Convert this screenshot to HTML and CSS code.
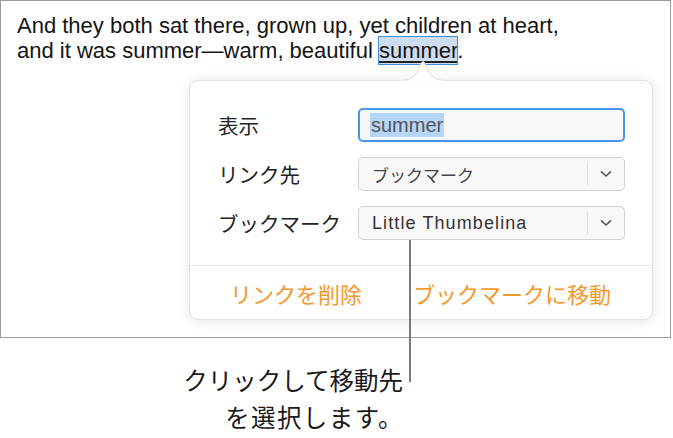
FILE: index.html
```html
<!DOCTYPE html>
<html lang="ja">
<head>
<meta charset="utf-8">
<title>Link popover</title>
<link rel="stylesheet" href="styles.css">
</head>
<body>
<div class="stage">
  <div class="frame">
    <p class="prose">And they both sat there, grown up, yet children at heart,<br>and it was summer—warm, beautiful <span class="link-sel">summer</span>.</p>
    <div class="popover">
      <svg class="arrow" width="46" height="21" viewBox="0 0 46 21" aria-hidden="true">
        <path d="M0 20.5 C9 20.5 13 18 17 12 L21.2 3 Q23 0 24.8 3 L29 12 C33 18 37 20.5 46 20.5" fill="#fff" stroke="#dcdcdc" stroke-width="1"/>
        <rect x="0" y="20.5" width="46" height="1" fill="#fff"/>
      </svg>
      <div class="fields">
        <span class="label">表示</span>
        <div class="input"><span class="input-sel">summer</span></div>
        <span class="label">リンク先</span>
        <div class="select">
          <span class="select-value jp">ブックマーク</span>
          <span class="select-btn"><svg width="12" height="8" viewBox="0 0 12 8"><path d="M1.5 1.8 L6 6 L10.5 1.8" fill="none" stroke="#555" stroke-width="1.6" stroke-linecap="round" stroke-linejoin="round"/></svg></span>
        </div>
        <span class="label">ブックマーク</span>
        <div class="select">
          <span class="select-value">Little Thumbelina</span>
          <span class="select-btn"><svg width="12" height="8" viewBox="0 0 12 8"><path d="M1.5 1.8 L6 6 L10.5 1.8" fill="none" stroke="#555" stroke-width="1.6" stroke-linecap="round" stroke-linejoin="round"/></svg></span>
        </div>
      </div>
      <div class="actions">
        <span class="action">リンクを削除</span>
        <span class="action">ブックマークに移動</span>
      </div>
    </div>
  </div>
  <span class="leader"></span>
  <p class="caption">クリックして移動先<br><span class="caption-2">を選択します。</span></p>
</div>
</body>
</html>
```
FILE: styles.css
```css
* { box-sizing: border-box; }
html, body { margin: 0; padding: 0; background: #fff; }
body { font-family: "Liberation Sans", "Noto Sans CJK JP", sans-serif; color: #1a1a1a; }

.stage { position: relative; width: 673px; height: 438px; overflow: hidden; }

.frame {
  width: 671px;
  height: 338px;
  border: 1px solid #9a9a9a;
}

.prose {
  margin: 0;
  padding: 12px 0 0 16px;
  font-size: 22px;
  line-height: 25px;
  color: #141414;
}

.link-sel {
  background: #cfdcee;
  outline: 1.5px solid #3b8ee8;
  outline-offset: 0;
  text-decoration: underline;
  text-decoration-color: #222;
  text-underline-offset: 3px;
  padding: 1px 0 1px;
}

.popover {
  position: relative;
  margin: 17px 0 0 188px;
  width: 464px;
  height: 240px;
  background: #fff;
  border: 1px solid #e2e2e2;
  border-radius: 9px;
  box-shadow: 0 1px 14px rgba(0, 0, 0, 0.10);
  font-family: "Noto Sans CJK JP", "Liberation Sans", sans-serif;
}

.arrow {
  position: absolute;
  left: 210px;
  top: -21px;
  display: block;
}

.fields {
  display: grid;
  grid-template-columns: 140px 267px;
  grid-auto-rows: 34px;
  row-gap: 15px;
  align-items: center;
  padding: 27px 0 0 28px;
  height: 184px;
}

.label {
  font-size: 20.5px;
  color: #222;
  line-height: 34px;
}

.input {
  height: 34px;
  border: 2px solid #4a94ee;
  border-radius: 5px;
  background: #f8f8f8;
  padding: 0 0 0 10px;
  display: flex;
  align-items: center;
}

.input-sel {
  font-family: "Liberation Sans", sans-serif;
  font-size: 20px;
  color: #555;
  background: #b6d5fb;
  line-height: 24px;
  padding: 0 1px;
}

.select {
  height: 34px;
  border: 1px solid #d2d2d2;
  border-radius: 5px;
  background: #f8f8f8;
  display: flex;
  align-items: center;
}

.select-value {
  flex: 1;
  padding-left: 13px;
  font-family: "Liberation Sans", sans-serif;
  font-size: 18px;
  letter-spacing: 1.1px;
  color: #333;
}

.select-value.jp {
  font-family: "Noto Sans CJK JP", sans-serif;
  font-size: 17px;
  letter-spacing: 0;
  color: #444;
}

.select-btn {
  width: 37px;
  height: 22px;
  border-left: 1px solid #dcdcdc;
  display: flex;
  align-items: center;
  justify-content: center;
}

.actions {
  border-top: 1px solid #e6e6e6;
  height: 54px;
  display: flex;
  align-items: center;
  gap: 51px;
  padding-left: 40px;
}

.action {
  font-size: 22px;
  color: #f4992b;
  line-height: 1;
}

.leader {
  position: absolute;
  left: 409px;
  top: 240px;
  width: 2px;
  height: 142px;
  background: #7a7a7a;
}

.caption {
  margin: 23px 0 0;
  width: 403px;
  text-align: right;
  font-family: "Noto Sans CJK JP", sans-serif;
  font-size: 24.5px;
  line-height: 37px;
  color: #1a1a1a;
}

.caption-2 {
  letter-spacing: 1.4px;
  margin-right: -1px;
}
```
